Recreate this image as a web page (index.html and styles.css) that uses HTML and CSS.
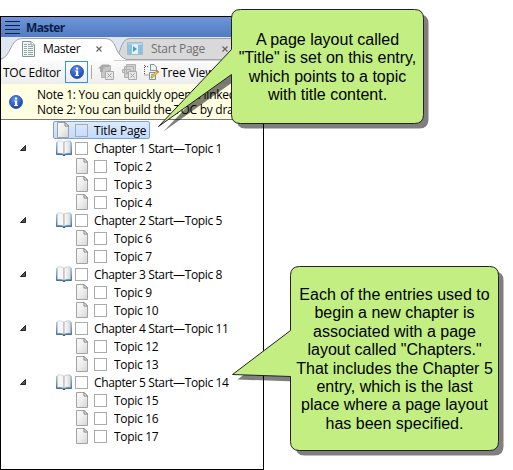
FILE: index.html
```html
<!DOCTYPE html>
<html lang="en">
<head>
<meta charset="utf-8">
<title>TOC Editor</title>
<link rel="stylesheet" href="styles.css">
</head>
<body>
<svg class="defs" width="0" height="0">
  <defs>
    <linearGradient id="paper" x1="0" y1="0" x2="1" y2="1"><stop offset="0" stop-color="#fafafa"/><stop offset=".5" stop-color="#eeeeee"/><stop offset="1" stop-color="#d4d4d4"/></linearGradient>
    <linearGradient id="leaf" x1="0" y1="0" x2="1" y2="0"><stop offset="0" stop-color="#fff"/><stop offset="1" stop-color="#d8d8d8"/></linearGradient>
    <linearGradient id="cover" x1="0" y1="0" x2="0" y2="1"><stop offset="0" stop-color="#a9cdea"/><stop offset="1" stop-color="#2f69ae"/></linearGradient>
    <radialGradient id="ball" cx=".4" cy=".25" r=".8"><stop offset="0" stop-color="#5d8cf0"/><stop offset="1" stop-color="#1740b4"/></radialGradient>
    <symbol id="page" viewBox="0 0 12 16"><path d="M.5.5H8L11.5 4V15.5H.5Z" fill="url(#paper)" stroke="#a2a2a2"/><path d="M8 .5V4H11.5Z" fill="#fff" stroke="#777" stroke-width=".9"/></symbol>
    <symbol id="book" viewBox="0 0 16 16"><path d="M.5 2V14.5H6L8 15.4 10 14.5H15.5V2" fill="url(#cover)" stroke="url(#cover)"/><path d="M1.5 1Q5.5.4 8 2V14.3Q5.5 12.8 1.5 13.2Z" fill="#f7f7f7" stroke="#c4c4c4" stroke-width=".6"/><path d="M14.5 1Q10.5.4 8 2V14.3Q10.5 12.8 14.5 13.2Z" fill="url(#leaf)" stroke="#b4b4b4" stroke-width=".6"/><path d="M8 2V14" stroke="#aaa" stroke-width=".7"/><path d="M7 15.2H9" stroke="#444"/></symbol>
    <symbol id="info" viewBox="0 0 14 14"><circle cx="7" cy="7" r="6.5" fill="url(#ball)" stroke="#2447a0" stroke-width=".8"/><path d="M6 2.6H8.2V4.4H6ZM5.2 5.6H8.2V10H9V11H5.2V10H6V6.6H5.2Z" fill="#fff"/></symbol>
    <symbol id="arrow" viewBox="0 0 6 6"><path d="M5.5 .5V5.5H.5Z" fill="#555" stroke="#222"/></symbol>
  </defs>
</svg>
<main class="panel">
  <header class="titlebar">
    <svg width="15" height="13" viewBox="0 0 15 13"><path d="M0 .5H15M0 4.5H15M0 8.5H15M0 12.5H15" stroke="#0b1f49"/></svg>
    <span class="heading">Master</span>
  </header>
  <nav class="tabs">
    <svg class="tabshape" width="262" height="23" viewBox="0 0 262 23">
      <path d="M113 23C121 18 118 2 129 1.5H262V23Z" fill="#d9d9d9" stroke="#a1a5ab"/>
      <path d="M0 23C10 20 9 1.500 21 1.500H104C117 1.500 112 17 125 22.500H262V23Z" fill="#fff"/>
      <path d="M0 22C10 20 9 1.500 21 1.500H104C117 1.500 112 17 125 22.500H262" fill="none" stroke="#a1a5ab"/>
    </svg>
    <div class="tab">
      <svg width="13" height="16" viewBox="0 0 13 16"><path d="M.5.5H9L12.5 4V15.5H.5Z" fill="#f2f7f6" stroke="#809796"/><path d="M9 .5V4H12.5" fill="#fff" stroke="#809796"/><path d="M2 3.5H5M6 3.5H8M2 5.5H5M6 5.5H11M2 7.5H5M6 7.5H11M2 9.5H5M6 9.5H11M2 11.5H5M6 11.5H11M2 13.5H5M6 13.5H11" stroke="#91aaa7"/></svg>
      <span class="name">Master</span>
      <svg class="close" width="6" height="6" viewBox="0 0 6 6"><path d="M.5.5L5.5 5.5M5.5.5L.5 5.5" stroke="#666" stroke-width="1.2"/></svg>
    </div>
    <div class="tab second">
      <svg width="16" height="13" viewBox="0 0 16 13"><path d="M.5.5H15.5V12.5H.5Z" fill="#d3e2e9" stroke="#a9bac4"/><path d="M1 1H5V12H1ZM11 3H15V12H11Z" fill="#83c5e5"/><path d="M1 1H15V2.5H1Z" fill="#a8d4e8"/><path d="M5 2.5H11V12H5Z" fill="#edf0f1"/><path d="M6 4L10 7 6 10Z" fill="#449fcb"/></svg>
      <span class="name start">Start Page</span>
      <svg class="close" width="6" height="6" viewBox="0 0 6 6"><path d="M.5.5L5.5 5.5M5.5.5L.5 5.5" stroke="#666" stroke-width="1.2"/></svg>
    </div>
  </nav>
  <div class="toolbar">
    <span class="editor">TOC Editor</span>
    <span class="toggle"><svg width="14" height="14"><use href="#info"/></svg></span>
    <i class="divider"></i>
    <svg class="tool" width="16" height="16" viewBox="0 0 16 16"><path d="M3.5 1.5H12.5V7H9V13.5H3.5Z" fill="#c6c6c6" stroke="#b4b4b4"/><path d="M0 4.500L3.500 1 7 4.500H5V8H2V4.500ZM4 .5H11V3H4Z" fill="#a9a9a9"/><path d="M7.5 7.5H15.5V15.5H7.5Z" fill="#e7e7e7" stroke="#aaa"/><path d="M9.500 9.500L13.500 13.500M13.500 9.500L9.500 13.500" stroke="#a0a0a0"/></svg>
    <svg class="tool gap" width="16" height="16" viewBox="0 0 16 16"><path d="M5.5.5H14.5V8.5H5.5ZM3.5 2.5H12.5V9.5H3.5ZM1.500 5.5H9.500V13.500H3.5V8.5H1.500Z" fill="#d2d2d2" stroke="#b0b0b0"/><path d="M7.5 7.5H15.5V15.5H7.5Z" fill="#e7e7e7" stroke="#aaa"/><path d="M9.500 9.500L13.500 13.500M13.500 9.500L9.500 13.500" stroke="#a0a0a0"/></svg>
    <svg class="tool gap" width="15" height="16" viewBox="0 0 15 16"><path d="M.5 1V11H6M1 2.5H5" fill="none" stroke="#555" stroke-dasharray="1 1"/><path d="M6.5.5H10L12.5 3V6.5H6.5ZM5.5 8.5H11.5V15.5H5.5Z" fill="#edf5f2" stroke="#789892"/><path d="M7 10.5H10M7 12.5H9" stroke="#83aaa0"/><path d="M13 6.5L14.5 8 9 13.5 7 14 7.5 12Z" fill="#f1c653" stroke="#8e7442" stroke-width=".6"/><path d="M12 7L13 6 15 8 14 9Z" fill="#d65f65"/></svg>
    <span class="tree">Tree View</span>
  </div>
  <section class="notes">
    <svg width="14" height="14"><use href="#info"/></svg>
    <div class="notecopy"><p>Note 1: You can quickly open a linked</p><p>Note 2: You can build the TOC by dragging</p></div>
  </section>
  <ul class="toc">
    <li class="entry title"><span class="pick"><svg class="page" width="12" height="16"><use href="#page"/></svg><i class="box"></i><span class="label">Title Page</span></span></li>
    <li class="entry chapter"><svg class="arrow" width="6" height="6"><use href="#arrow"/></svg><svg width="16" height="16"><use href="#book"/></svg><i class="box"></i><span class="label">Chapter 1 Start—Topic 1</span></li>
    <li class="entry topic"><svg width="12" height="16"><use href="#page"/></svg><i class="box"></i><span class="label">Topic 2</span></li>
    <li class="entry topic"><svg width="12" height="16"><use href="#page"/></svg><i class="box"></i><span class="label">Topic 3</span></li>
    <li class="entry topic"><svg width="12" height="16"><use href="#page"/></svg><i class="box"></i><span class="label">Topic 4</span></li>
    <li class="entry chapter"><svg class="arrow" width="6" height="6"><use href="#arrow"/></svg><svg width="16" height="16"><use href="#book"/></svg><i class="box"></i><span class="label">Chapter 2 Start—Topic 5</span></li>
    <li class="entry topic"><svg width="12" height="16"><use href="#page"/></svg><i class="box"></i><span class="label">Topic 6</span></li>
    <li class="entry topic"><svg width="12" height="16"><use href="#page"/></svg><i class="box"></i><span class="label">Topic 7</span></li>
    <li class="entry chapter"><svg class="arrow" width="6" height="6"><use href="#arrow"/></svg><svg width="16" height="16"><use href="#book"/></svg><i class="box"></i><span class="label">Chapter 3 Start—Topic 8</span></li>
    <li class="entry topic"><svg width="12" height="16"><use href="#page"/></svg><i class="box"></i><span class="label">Topic 9</span></li>
    <li class="entry topic"><svg width="12" height="16"><use href="#page"/></svg><i class="box"></i><span class="label">Topic 10</span></li>
    <li class="entry chapter"><svg class="arrow" width="6" height="6"><use href="#arrow"/></svg><svg width="16" height="16"><use href="#book"/></svg><i class="box"></i><span class="label">Chapter 4 Start—Topic 11</span></li>
    <li class="entry topic"><svg width="12" height="16"><use href="#page"/></svg><i class="box"></i><span class="label">Topic 12</span></li>
    <li class="entry topic"><svg width="12" height="16"><use href="#page"/></svg><i class="box"></i><span class="label">Topic 13</span></li>
    <li class="entry chapter"><svg class="arrow" width="6" height="6"><use href="#arrow"/></svg><svg width="16" height="16"><use href="#book"/></svg><i class="box"></i><span class="label">Chapter 5 Start—Topic 14</span></li>
    <li class="entry topic"><svg width="12" height="16"><use href="#page"/></svg><i class="box"></i><span class="label">Topic 15</span></li>
    <li class="entry topic"><svg width="12" height="16"><use href="#page"/></svg><i class="box"></i><span class="label">Topic 16</span></li>
    <li class="entry topic"><svg width="12" height="16"><use href="#page"/></svg><i class="box"></i><span class="label">Topic 17</span></li>
  </ul>
</main>
<aside class="callout first">
  <svg class="bubble" width="275" height="125" viewBox="0 0 275 125">
    <path d="M82.500 .5H256.500Q265.500 .5 265.500 9.500V105.500Q265.500 114.500 256.500 114.500H82.500Q73.500 114.500 73.500 105.500V65.500L.5 117.500 73.500 40.500V9.500Q73.500 .5 82.500 .5Z" transform="translate(5 5)" fill="#000" fill-opacity=".5"/>
    <path d="M82.500 .5H256.500Q265.500 .5 265.500 9.500V105.500Q265.500 114.500 256.500 114.500H82.500Q73.500 114.500 73.500 105.500V65.500L.5 117.500 73.500 40.500V9.500Q73.500 .5 82.500 .5Z" fill="#c2ee82" stroke="#222"/>
  </svg>
  <p class="copy">A page layout called<br>"Title" is set on this entry,<br>which points to a topic<br>with title content.</p>
</aside>
<aside class="callout second-note">
  <svg class="bubble" width="275" height="192" viewBox="0 0 275 192">
    <path d="M67.500 .5H257.500Q266.500 .5 266.500 9.500V175.500Q266.500 184.500 257.500 184.500H67.500Q58.500 184.500 58.500 175.500V110.500L.5 108.500 58.500 64.500V9.500Q58.500 .5 67.500 .5Z" transform="translate(5 5)" fill="#000" fill-opacity=".5"/>
    <path d="M67.500 .5H257.500Q266.500 .5 266.500 9.500V175.500Q266.500 184.500 257.500 184.500H67.500Q58.500 184.500 58.500 175.500V110.500L.5 108.500 58.500 64.500V9.500Q58.500 .5 67.500 .5Z" fill="#c2ee82" stroke="#222"/>
  </svg>
  <p class="copy">Each of the entries used to<br>begin a new chapter is<br>associated with a page<br>layout called "Chapters."<br>That includes the Chapter 5<br>entry, which is the last<br>place where a page layout<br>has been specified.</p>
</aside>
</body>
</html>
```
FILE: styles.css
```css
* { box-sizing: border-box; }
html, body { margin: 0; padding: 0; }
body { width: 513px; height: 470px; padding-top: 16px; overflow: hidden; background: #fff; position: relative; font: 12px/15px "Open Sans", "Noto Sans", sans-serif; color: #000; letter-spacing: -.3px; }
svg { display: block; flex: none; overflow: visible; }
p, ul { margin: 0; padding: 0; list-style: none; }
span { white-space: nowrap; }
.defs { position: absolute; }
.panel { width: 264px; height: 454px; border: 1px solid #000; background: #fff; overflow: hidden; }
.titlebar { height: 20px; display: flex; align-items: center; padding-left: 4px; gap: 6px; background: linear-gradient(#6e97d8, #517bc2); }
.heading { font-weight: 700; color: #0b1f49; letter-spacing: -.6px; }
.tabs { height: 23px; display: flex; position: relative; background: #dfe6f1; }
.tabshape { position: absolute; left: 0; top: 0; }
.tab { display: flex; align-items: center; position: relative; width: 125px; padding-left: 21px; }
.tab .name { margin-left: 8px; width: 53px; }
.tab.second { padding-left: 1px; color: #707070; width: 130px; }
.tab.second .name { width: 71px; }
.toolbar { height: 24px; display: flex; align-items: center; padding-left: 2px; background: linear-gradient(#fcfcfc, #ededed); }
.editor { width: 62px; letter-spacing: -.25px; }
.toggle { width: 23px; height: 22px; border: 1px solid #3391f0; display: grid; place-items: center; }
.divider { width: 1px; height: 14px; background: #aaa; margin: 0 6px 0 3px; }
.gap { margin-left: 7px; }
.tree { margin-left: 2px; letter-spacing: -.1px; }
.notes { height: 36px; background: #ffffe1; border-bottom: 1px solid #777; display: flex; align-items: center; padding-left: 8px; }
.notecopy { margin-left: 14px; white-space: nowrap; letter-spacing: -.25px; }
.toc { padding-top: 1px; }
.entry { height: 18px; display: flex; align-items: center; }
.box { display: block; flex: none; width: 13px; height: 13px; border: 1px solid #aaa; }
.pick { margin-left: 52px; width: 97px; height: 18px; display: flex; align-items: center; border: 1px solid #7da2ce; border-radius: 2px; background: linear-gradient(#dceafc, #c1dbfc); }
.pick .page { margin-left: 3px; margin-right: 6px; }
.pick .label { letter-spacing: -.15px; }
.label { margin-left: 6px; }
.chapter { padding-left: 19px; letter-spacing: -.37px; }
.chapter .arrow { margin-right: 30px; }
.chapter .box { margin-left: 3px; }
.topic { padding-left: 75px; }
.topic .box { margin-left: 6px; }
.topic .label { margin-left: 7px; }
.callout { position: absolute; }
.first { left: 158px; top: 9px; }
.second-note { left: 232px; top: 266px; }
.bubble { position: absolute; left: 0; top: 0; }
.copy { position: relative; white-space: nowrap; text-align: center; font: 16px/18.4px "Liberation Sans", Arial, sans-serif; letter-spacing: 0; }
.first .copy { margin-left: 74px; margin-top: 22px; width: 191px; }
.second-note .copy { margin-left: 59px; margin-top: 20px; width: 207px; }
```
